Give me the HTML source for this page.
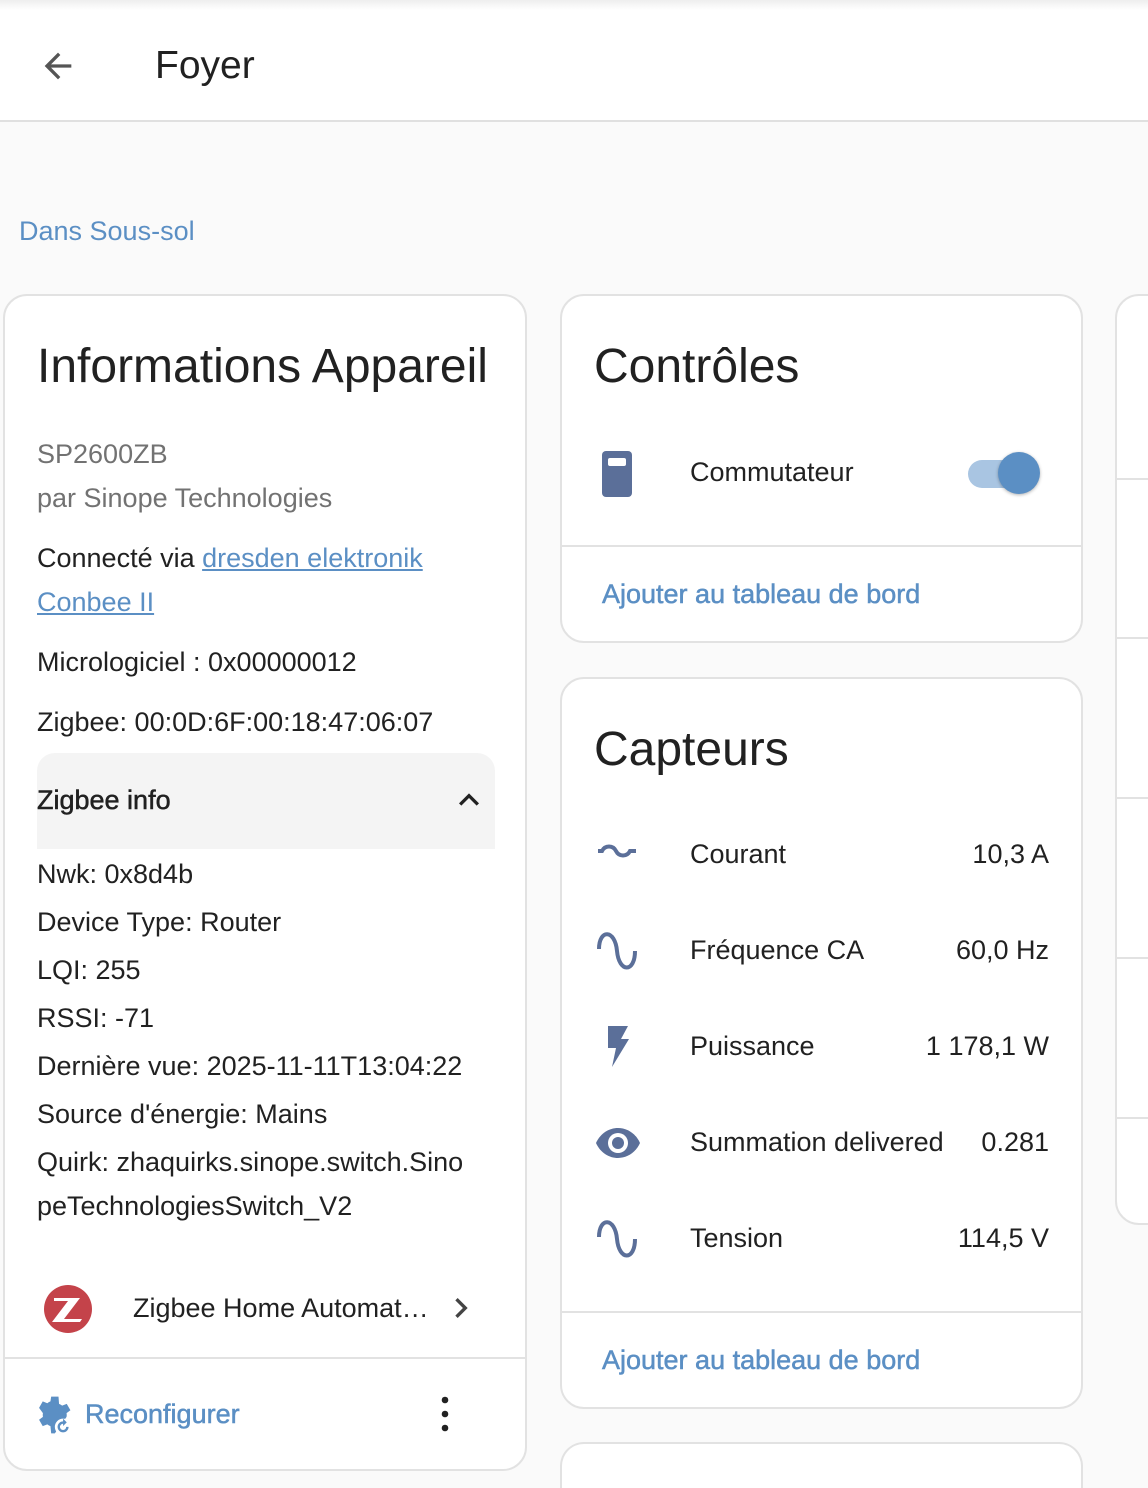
<!DOCTYPE html><html style="overflow:hidden;height:1488px"><head><meta charset="utf-8"><style>
*{box-sizing:border-box;margin:0;padding:0}
body{width:1148px;height:1488px;overflow:hidden;background:#fafafa;font-family:"Liberation Sans",sans-serif;color:#212121;position:relative}
.hdr{position:absolute;left:0;top:0;width:1148px;height:122px;background:#fff;border-bottom:2px solid #e0e0e0}
.hdr .shade{position:absolute;left:0;top:0;width:100%;height:10px;background:linear-gradient(#eee,#fff)}
.card{position:absolute;background:#fff;border:2px solid #e2e2e2;border-radius:24px;overflow:hidden}
.a{position:absolute;white-space:nowrap}
.t{font-size:27px}
.blue{color:#5b8fc4}
.div{position:absolute;left:0;right:0;height:2px;background:#e2e2e2}
</style></head><body>
<div class="hdr"><div class="shade"></div>
<svg class="a" style="left:38px;top:46px" width="40" height="40" viewBox="0 0 24 24"><path d="M20 11H7.83l5.59-5.59L12 4l-8 8 8 8 1.41-1.41L7.83 13H20v-2z" fill="#555"/></svg>
<div class="a" style="left:155px;top:44px;font-size:39px">Foyer</div></div>
<div class="a t blue" style="left:19px;top:216px">Dans Sous-sol</div>

<div class="card" style="left:3px;top:294px;width:524px;height:1177px">
<div class="a" style="left:32px;top:43px;font-size:48px">Informations Appareil</div>
<div class="a t" style="left:32px;top:143px;color:#727272">SP2600ZB</div>
<div class="a t" style="left:32px;top:187px;color:#727272">par Sinope Technologies</div>
<div class="a t" style="left:32px;top:247px">Connecté via <span class="blue" style="text-decoration:underline">dresden elektronik</span></div>
<div class="a t blue" style="left:32px;top:291px;text-decoration:underline">Conbee II</div>
<div class="a t" style="left:32px;top:351px">Micrologiciel : 0x00000012</div>
<div class="a t" style="left:32px;top:411px">Zigbee: 00:0D:6F:00:18:47:06:07</div>
<div class="a" style="left:32px;top:457px;width:458px;height:96px;background:#f4f4f4;border-radius:18px 18px 0 0"></div>
<div class="a t" style="left:32px;top:489px;-webkit-text-stroke:0.5px #212121">Zigbee info</div>
<svg class="a" style="left:448px;top:488px" width="32" height="32" viewBox="0 0 24 24"><path d="M7.41 15.41 12 10.83l4.59 4.58L18 14l-6-6-6 6z" fill="#212121" transform="translate(-3 -3) scale(1.25)"/></svg>
<div class="a t" style="left:32px;top:563px">Nwk: 0x8d4b</div>
<div class="a t" style="left:32px;top:611px">Device Type: Router</div>
<div class="a t" style="left:32px;top:659px">LQI: 255</div>
<div class="a t" style="left:32px;top:707px">RSSI: -71</div>
<div class="a t" style="left:32px;top:755px">Dernière vue: 2025-11-11T13:04:22</div>
<div class="a t" style="left:32px;top:803px">Source d'énergie: Mains</div>
<div class="a t" style="left:32px;top:851px">Quirk: zhaquirks.sinope.switch.Sino</div>
<div class="a t" style="left:32px;top:895px">peTechnologiesSwitch_V2</div>
<svg class="a" style="left:38px;top:988px" width="50" height="50" viewBox="0 0 50 50"><circle cx="25" cy="25" r="24" fill="#c4434a"/><path d="M11 14h26l-16 21h18l-2 3H9l16-21H11z" fill="#fff"/></svg>
<div class="a t" style="left:128px;top:997px">Zigbee Home Automat…</div>
<svg class="a" style="left:440px;top:996px" width="32" height="32" viewBox="0 0 24 24"><path d="M8.59 16.59 13.17 12 8.59 7.41 10 6l6 6-6 6z" fill="#444" transform="translate(-3 -3) scale(1.25)"/></svg>
<div class="div" style="top:1061px"></div>
<svg class="a" style="left:26px;top:1097px" width="44" height="44" viewBox="0 0 24 24"><path d="M12 8a4 4 0 1 0 0 8 4 4 0 0 0 0-8zm7.4 5 .1-1-.1-1 2.1-1.6-2-3.5-2.5 1a7 7 0 0 0-1.7-1L15 2h-4l-.4 2.6a7 7 0 0 0-1.7 1l-2.5-1-2 3.5L6.5 11l-.1 1 .1 1-2.1 1.6 2 3.5 2.5-1a7 7 0 0 0 1.7 1L11 22h2z" fill="#5b8fc4"/><circle cx="17.5" cy="18.5" r="4.5" fill="#fff"/><path d="M17.5 15.5a3 3 0 1 0 3 3h-1.3a1.7 1.7 0 1 1-1.7-1.7V18l2-2-2-2z" fill="#5b8fc4"/></svg>
<div class="a t blue" style="left:80px;top:1103px;-webkit-text-stroke:0.5px #5b8fc4">Reconfigurer</div>
<svg class="a" style="left:424px;top:1100px" width="32" height="36" viewBox="0 0 8 36"><circle cx="4" cy="4" r="3.3" fill="#212121"/><circle cx="4" cy="18" r="3.3" fill="#212121"/><circle cx="4" cy="32" r="3.3" fill="#212121"/></svg>
</div>

<div class="card" style="left:560px;top:294px;width:523px;height:349px">
<div class="a" style="left:32px;top:43px;font-size:48px">Contrôles</div>
<svg class="a" style="left:40px;top:155px" width="30" height="46" viewBox="0 0 30 46"><rect width="30" height="46" rx="4" fill="#5b6f99"/><rect x="6" y="7" width="18" height="8" rx="2" fill="#fff"/></svg>
<div class="a t" style="left:128px;top:161px">Commutateur</div>
<div class="a" style="left:406px;top:164px;width:66px;height:28px;border-radius:14px;background:#a9c5e2"></div>
<div class="a" style="left:436px;top:156px;width:42px;height:42px;border-radius:50%;background:#5b8fc4;box-shadow:0 1px 3px rgba(0,0,0,.3)"></div>
<div class="div" style="top:249px"></div>
<div class="a t blue" style="left:40px;top:283px;-webkit-text-stroke:0.5px #5b8fc4">Ajouter au tableau de bord</div>
</div>

<div class="card" style="left:560px;top:677px;width:523px;height:732px">
<div class="a" style="left:32px;top:43px;font-size:48px">Capteurs</div>
<svg class="a" style="left:34px;top:164px" width="44" height="24" viewBox="0 0 44 24"><path d="M2 8h4c3-6 11-6 14 0s11 6 14 0h6" stroke="#5b6f99" stroke-width="4" fill="none"/></svg>
<div class="a t" style="left:128px;top:160px">Courant</div><div class="a t" style="right:32px;top:160px">10,3 A</div>
<svg class="a" style="left:34px;top:250px" width="44" height="44" viewBox="0 0 44 44"><path d="M3 20c0-20 16-20 18 2s18 22 18 0" stroke="#5b6f99" stroke-width="4" fill="none"/></svg>
<div class="a t" style="left:128px;top:256px">Fréquence CA</div><div class="a t" style="right:32px;top:256px">60,0 Hz</div>
<svg class="a" style="left:44px;top:346px" width="24" height="42" viewBox="0 0 24 42"><path d="M2 1h20l-7 13h8L6 42l4-19H2z" fill="#5b6f99"/></svg>
<div class="a t" style="left:128px;top:352px">Puissance</div><div class="a t" style="right:32px;top:352px">1 178,1 W</div>
<svg class="a" style="left:33px;top:448px" width="46" height="32" viewBox="0 0 46 32"><path d="M1 16C10-4 36-4 45 16 36 36 10 36 1 16z" fill="#5b6f99"/><circle cx="23" cy="16" r="10" fill="#fff"/><circle cx="23" cy="16" r="6" fill="#5b6f99"/></svg>
<div class="a t" style="left:128px;top:448px">Summation delivered</div><div class="a t" style="right:32px;top:448px">0.281</div>
<svg class="a" style="left:34px;top:538px" width="44" height="44" viewBox="0 0 44 44"><path d="M3 20c0-20 16-20 18 2s18 22 18 0" stroke="#5b6f99" stroke-width="4" fill="none"/></svg>
<div class="a t" style="left:128px;top:544px">Tension</div><div class="a t" style="right:32px;top:544px">114,5 V</div>
<div class="div" style="top:632px"></div>
<div class="a t blue" style="left:40px;top:666px;-webkit-text-stroke:0.5px #5b8fc4">Ajouter au tableau de bord</div>
</div>

<div class="card" style="left:560px;top:1442px;width:523px;height:46px;border-bottom:none;border-radius:24px 24px 0 0"></div>
<div class="card" style="left:1115px;top:294px;width:100px;height:931px">
<div class="div" style="top:182px"></div><div class="div" style="top:341px"></div><div class="div" style="top:501px"></div><div class="div" style="top:661px"></div><div class="div" style="top:821px"></div>
</div>
</body></html>
